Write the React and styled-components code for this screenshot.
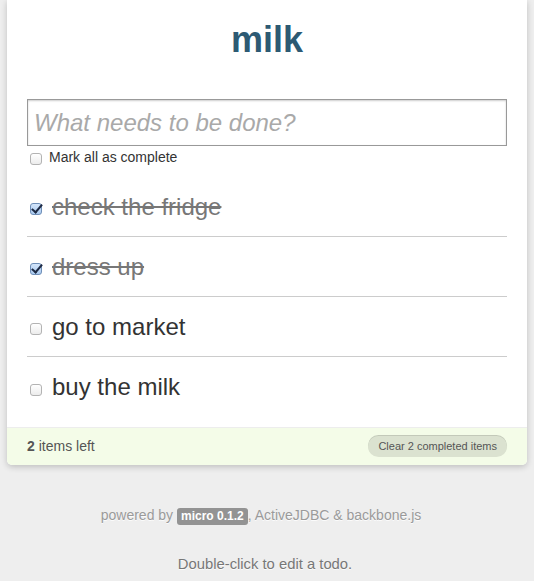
import React from "react";
import styled, { createGlobalStyle, css } from "styled-components";

const GlobalStyle = createGlobalStyle`
  html, body {
    margin: 0;
    padding: 0;
    background: #eeeeee;
  }
  body {
    font-family: "Liberation Sans", Arial, sans-serif;
    color: #333;
    line-height: 1.4em;
  }
`;

const Page = styled.div`
  width: 520px;
  margin: 0 auto;
`;

const Card = styled.section`
  background: #fff;
  padding: 20px 20px 0;
  margin-bottom: 40px;
  box-shadow: rgba(0, 0, 0, 0.2) 0 2px 6px 0;
  border-radius: 0 0 5px 5px;
`;

const Title = styled.h1`
  margin: 0 0 39px;
  font-size: 36px;
  line-height: 40px;
  font-weight: bold;
  text-align: center;
  color: #2d5a73;
`;

const NewTodo = styled.input`
  display: block;
  box-sizing: border-box;
  width: 480px;
  height: 47px;
  margin: 0;
  padding: 6px;
  font-family: inherit;
  font-size: 24px;
  border: 1px solid #999;
  box-shadow: rgba(0, 0, 0, 0.2) 0 1px 2px 0 inset;
  outline: none;
  &::placeholder {
    color: #a9a9a9;
    font-style: italic;
  }
`;

const Box = styled.input.attrs({ type: "checkbox" })`
  appearance: none;
  position: relative;
  box-sizing: border-box;
  width: 12px;
  height: 12px;
  margin: 0;
  border: 1px solid #b3b3b3;
  border-radius: 3px;
  background: linear-gradient(#ffffff, #ececec);
  flex: none;
  ${(p) =>
    p.checked &&
    css`
      border-color: #6f8fb8;
      background: linear-gradient(#d4e6fb, #a9c9ef);
      &::after {
        content: "";
        position: absolute;
        left: 3px;
        top: -2px;
        width: 4px;
        height: 9px;
        border: solid #1d2a44;
        border-width: 0 2px 2px 0;
        transform: rotate(40deg);
      }
    `}
`;

const MarkAll = styled.label`
  display: flex;
  align-items: center;
  gap: 7px;
  height: 20px;
  margin: 1px 0 10px 3px;
  font-size: 14px;
  color: #333;
  ${Box} {
    margin-top: 3px;
  }
`;

const List = styled.ul`
  list-style: none;
  margin: 0 0 10px;
  padding: 0;
`;

const Item = styled.li`
  display: flex;
  align-items: center;
  gap: 10px;
  height: 60px;
  box-sizing: border-box;
  padding-left: 3px;
  border-bottom: 1px solid #cccccc;
  &:last-child {
    border-bottom: none;
  }
  ${Box} {
    margin-top: 5px;
  }
`;

const ItemText = styled.span`
  font-size: 24px;
  line-height: 26px;
  color: ${(p) => (p.done ? "#777" : "#333")};
  text-decoration: ${(p) => (p.done ? "line-through" : "none")};
`;

const Footer = styled.footer`
  display: flex;
  align-items: center;
  justify-content: space-between;
  margin: 0 -20px;
  padding: 0 20px;
  height: 37px;
  background: #f4fce8;
  border-top: 1px solid #ededed;
  border-radius: 0 0 5px 5px;
  font-size: 14px;
  color: #555;
  b {
    font-weight: bold;
  }
`;

const ClearButton = styled.span`
  line-height: 20px;
  padding: 0 10px 1px;
  font-size: 11px;
  color: #555;
  background: rgba(0, 0, 0, 0.1);
  border-radius: 12px;
  box-shadow: rgba(0, 0, 0, 0.2) 0 -1px 0 0;
`;

const Credits = styled.div`
  padding-right: 12px;
  text-align: center;
  font-size: 14px;
  line-height: 20px;
  color: #9a9a9a;
  text-shadow: rgba(255, 255, 255, 0.8) 0 1px 0;
`;

const Badge = styled.span`
  display: inline-block;
  padding: 0 4px;
  font-size: 12px;
  line-height: 17px;
  font-weight: bold;
  color: #fff;
  background: #939393;
  border-radius: 3px;
  text-shadow: none;
`;

const Instructions = styled.div`
  margin-top: 29px;
  padding-right: 4px;
  text-align: center;
  font-size: 14.8px;
  line-height: 20px;
  color: #777;
  text-shadow: rgba(255, 255, 255, 0.8) 0 1px 0;
`;

const todos = [
  { text: "check the fridge", done: true },
  { text: "dress up", done: true },
  { text: "go to market", done: false },
  { text: "buy the milk", done: false },
];

export default function App() {
  const left = todos.filter((t) => !t.done).length;
  const completed = todos.length - left;
  return (
    <Page>
      <GlobalStyle />
      <Card>
        <Title>milk</Title>
        <NewTodo placeholder="What needs to be done?" />
        <MarkAll>
          <Box readOnly checked={false} />
          Mark all as complete
        </MarkAll>
        <List>
          {todos.map((t) => (
            <Item key={t.text}>
              <Box readOnly checked={t.done} />
              <ItemText done={t.done}>{t.text}</ItemText>
            </Item>
          ))}
        </List>
        <Footer>
          <span>
            <b>{left}</b> items left
          </span>
          <ClearButton>Clear {completed} completed items</ClearButton>
        </Footer>
      </Card>
      <Credits>
        powered by <Badge>micro 0.1.2</Badge>, ActiveJDBC &amp; backbone.js
      </Credits>
      <Instructions>Double-click to edit a todo.</Instructions>
    </Page>
  );
}
